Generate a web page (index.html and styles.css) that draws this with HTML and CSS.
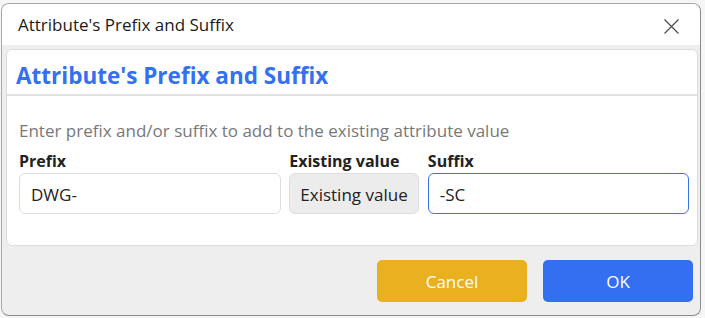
FILE: index.html
```html
<!DOCTYPE html>
<html lang="en">
<head>
    <meta charset="UTF-8">
    <title>Attribute's Prefix and Suffix</title>
    <link rel="stylesheet" href="styles.css">
</head>
<body>
    <div class="dialog">
        <div class="titlebar">
            <span class="title">Attribute's Prefix and Suffix</span>
            <svg class="close" width="15" height="15" viewBox="0 0 15 15">
                <path d="M0.5 0.5 L14.5 14.5 M14.5 0.5 L0.5 14.5" stroke="#4a4a4a" stroke-width="1.2" fill="none"/>
            </svg>
        </div>
        <div class="card">
            <div class="card-head">
                <h2>Attribute's Prefix and Suffix</h2>
            </div>
            <div class="card-body">
                <p class="hint">Enter prefix and/or suffix to add to the existing attribute value</p>
                <div class="fields">
                    <div class="field prefix">
                        <label>Prefix</label>
                        <input type="text" value="DWG-">
                    </div>
                    <div class="field existing">
                        <label>Existing value</label>
                        <div class="readonly">Existing value</div>
                    </div>
                    <div class="field suffix">
                        <label>Suffix</label>
                        <input type="text" class="focused" value="-SC">
                    </div>
                </div>
            </div>
        </div>
        <div class="footer">
            <button class="btn cancel">Cancel</button>
            <button class="btn ok">OK</button>
        </div>
    </div>
</body>
</html>
```

FILE: styles.css
```css
body {
    margin: 0;
    background: #f6f6f6;
    font-family: "Open Sans", "Noto Sans", sans-serif;
}
.dialog {
    margin: 3px 4px 0 1px;
    height: 313px;
    box-sizing: border-box;
    border: 1px solid #a8a8a8;
    border-right-color: #8c8c8c;
    border-bottom-color: #8c8c8c;
    border-radius: 8px;
    background: #eeeeee;
    overflow: hidden;
    display: flex;
    flex-direction: column;
}
.titlebar {
    background: #fff;
    height: 41px;
    display: flex;
    align-items: center;
    justify-content: space-between;
    padding: 0 21px 0 16px;
    flex-shrink: 0;
}
.title {
    font-size: 17px;
    color: #1a1a1a;
}
.close {
    margin-top: 3px;
}
.card {
    margin: 4px 2px 0 4px;
    background: #fff;
    border: 1px solid #dcdcdc;
    border-radius: 6px;
    height: 197px;
    box-sizing: border-box;
}
.card-head {
    padding: 13px 9px 5px;
    border-bottom: 2px solid #e2e2e2;
}
.card-head h2 {
    margin: 0;
    font-size: 22.5px;
    line-height: 26px;
    font-weight: 700;
    color: #3470f0;
}
.card-body {
    padding: 25px 8px 0 12px;
}
.hint {
    margin: 0 0 11px 0;
    font-size: 17px;
    line-height: 20px;
    color: #787878;
}
.fields {
    display: flex;
    gap: 8px;
}
.field {
    display: flex;
    flex-direction: column;
}
.field label {
    font-size: 16px;
    line-height: 18px;
    font-weight: 700;
    color: #222;
    margin-bottom: 3px;
}
.prefix {
    width: 263px;
}
.suffix {
    width: 262px;
    margin-left: 1px;
}
.existing {
    width: 130px;
}
.field input, .readonly {
    height: 41px;
    box-sizing: border-box;
    border: 1px solid #dedede;
    border-radius: 6px;
    padding: 2px 11px 0;
    font-family: inherit;
    font-size: 17px;
    color: #222;
    background: #fff;
    outline: none;
}
.readonly {
    background: #ececec;
    display: flex;
    align-items: center;
    justify-content: center;
    padding: 2px 0 0;
    white-space: nowrap;
}
.field input.focused {
    border-color: #3a72ee;
}
.footer {
    display: flex;
    justify-content: flex-end;
    gap: 16px;
    padding: 14px 7px 0 0;
}
.btn {
    width: 150px;
    height: 42px;
    border: none;
    border-radius: 5px;
    color: #fff;
    font-family: inherit;
    font-size: 17px;
}
.cancel {
    background: #e9b020;
}
.ok {
    background: #336ff0;
}
```
